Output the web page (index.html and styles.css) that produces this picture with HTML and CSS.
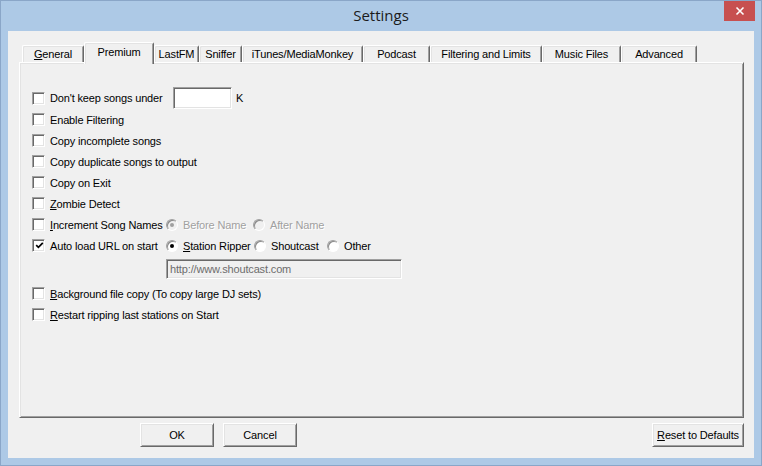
FILE: index.html
```html
<!DOCTYPE html>
<html>
<head>
<meta charset="utf-8">
<title>Settings</title>
<link rel="stylesheet" href="styles.css">
</head>
<body>
<div class="window">
  <div class="titlebar">
    <div class="title">Settings</div>
    <div class="close"><svg width="10" height="10" viewBox="0 0 10 10"><path d="M1.5 1.5L8.5 8.5M8.5 1.5L1.5 8.5" stroke="#fff" stroke-width="1.6" fill="none"/></svg></div>
  </div>
  <div class="client">
    <div class="tabs">
      <div class="tab t-general"><u>G</u>eneral</div>
      <div class="tab tab-active t-premium">Premium</div>
      <div class="tab t-lastfm">LastFM</div>
      <div class="tab t-sniffer">Sniffer</div>
      <div class="tab t-itunes">iTunes/MediaMonkey</div>
      <div class="tab t-podcast">Podcast</div>
      <div class="tab t-filter">Filtering and Limits</div>
      <div class="tab t-music">Music Files</div>
      <div class="tab t-adv">Advanced</div>
    </div>
    <div class="panel">
      <div class="row row-first">
        <div class="check w-under"><span class="cb"></span><span>Don't keep songs under</span></div>
        <span class="textbox"></span><span class="unit">K</span>
      </div>
      <div class="row"><div class="check"><span class="cb"></span><span>Enable Filtering</span></div></div>
      <div class="row"><div class="check"><span class="cb"></span><span>Copy incomplete songs</span></div></div>
      <div class="row"><div class="check"><span class="cb"></span><span>Copy duplicate songs to output</span></div></div>
      <div class="row"><div class="check"><span class="cb"></span><span>Copy on Exit</span></div></div>
      <div class="row"><div class="check"><span class="cb"></span><span><u>Z</u>ombie Detect</span></div></div>
      <div class="row">
        <div class="check w-ctrl"><span class="cb"></span><span><u>I</u>ncrement Song Names</span></div>
        <div class="opt disabled w-before"><span class="rb on"></span><span>Before Name</span></div>
        <div class="opt disabled"><span class="rb"></span><span>After Name</span></div>
      </div>
      <div class="row">
        <div class="check w-ctrl"><span class="cb checked"><svg width="9" height="9" viewBox="0 0 9 9"><path d="M1.2 4.2L3.4 6.4L7.8 1.8" stroke="#000" stroke-width="1.7" fill="none"/></svg></span><span>Auto load URL on start</span></div>
        <div class="opt w-station"><span class="rb on"></span><span><u>S</u>tation Ripper</span></div>
        <div class="opt w-shout"><span class="rb"></span><span>Shoutcast</span></div>
        <div class="opt"><span class="rb"></span><span>Other</span></div>
      </div>
      <div class="row-url"><div class="urlbox">http://www.shoutcast.com</div></div>
      <div class="row"><div class="check"><span class="cb"></span><span><u>B</u>ackground file copy (To copy large DJ sets)</span></div></div>
      <div class="row"><div class="check"><span class="cb"></span><span><u>R</u>estart ripping last stations on Start</span></div></div>
    </div>
    <div class="buttons">
      <div class="btn b-ok">OK</div>
      <div class="btn b-cancel">Cancel</div>
      <div class="spacer"></div>
      <div class="btn b-reset"><u>R</u>eset to Defaults</div>
    </div>
  </div>
</div>
</body>
</html>
```

FILE: styles.css
```css
html, body {
  margin: 0;
  padding: 0;
}
body {
  font-family: "Liberation Sans", Arial, sans-serif;
  font-size: 11px;
  letter-spacing: -0.15px;
  color: #000;
}
u {
  text-decoration: underline;
  text-underline-offset: 1px;
}
.window {
  width: 762px;
  height: 466px;
  box-sizing: border-box;
  border: 1px solid #8aa6c8;
  background: #adc9e6;
  display: flex;
  flex-direction: column;
}
.titlebar {
  height: 30px;
  display: flex;
  align-items: flex-start;
  padding: 0 6px 0 37px;
  flex: 0 0 auto;
}
.title {
  flex: 1;
  text-align: center;
  font-family: "Open Sans", "Noto Sans", sans-serif;
  font-size: 15px;
  letter-spacing: 0;
  line-height: 29px;
  color: #1b1b1b;
}
.close {
  width: 31px;
  height: 20px;
  background: #c75050;
  display: flex;
  align-items: center;
  justify-content: center;
}
.client {
  flex: 1;
  margin: 0 7px 7px 7px;
  background: #f0f0f0;
  padding: 11px 10px 11px 11px;
  display: flex;
  flex-direction: column;
  min-height: 0;
}
.tabs {
  height: 20px;
  display: flex;
  align-items: flex-end;
  padding-left: 3px;
  flex: 0 0 auto;
}
.tab {
  box-sizing: border-box;
  height: 17px;
  border-top: 1px solid #fff;
  border-left: 1px solid #fff;
  border-right: 1px solid #696969;
  border-radius: 2px 2px 0 0;
  box-shadow: inset 1px 1px 0 #e3e3e3, inset -1px 0 0 #a0a0a0;
  text-align: center;
  line-height: 16px;
  white-space: nowrap;
  background: #f0f0f0;
}
.tab-active {
  height: 22px;
  margin-bottom: -2px;
  padding-top: 1px;
  position: relative;
  z-index: 1;
}
.t-general { width: 62px; }
.t-premium { width: 70px; }
.t-lastfm { width: 45px; }
.t-sniffer { width: 43px; }
.t-itunes { width: 121px; }
.t-podcast { width: 67px; }
.t-filter { width: 112px; }
.t-music { width: 79px; }
.t-adv { width: 76px; }

.panel {
  flex: 1;
  box-sizing: border-box;
  border: 1px solid;
  border-color: #fff #696969 #696969 #fff;
  box-shadow: inset 1px 1px 0 #e3e3e3, inset -1px -1px 0 #a0a0a0;
  padding: 24px 12px 0 12px;
  display: flex;
  flex-direction: column;
}
.row {
  height: 21px;
  display: flex;
  align-items: center;
  flex: 0 0 auto;
}
.row-first {
  height: 22px;
}
.check {
  display: flex;
  align-items: center;
  gap: 5px;
  white-space: nowrap;
}
.w-under { width: 141px; }
.w-ctrl { width: 134px; }
.cb {
  width: 13px;
  height: 13px;
  box-sizing: border-box;
  background: #fff;
  border: 1px solid;
  border-color: #a0a0a0 #fff #fff #a0a0a0;
  box-shadow: inset 1px 1px 0 #696969, inset -1px -1px 0 #e3e3e3;
  display: flex;
  align-items: center;
  justify-content: center;
  flex: 0 0 auto;
}
.cb svg {
  display: block;
  margin: 0 0 0 1px;
}
.textbox {
  width: 59px;
  height: 22px;
  box-sizing: border-box;
  background: #fff;
  border: 1px solid;
  border-color: #a0a0a0 #fff #fff #a0a0a0;
  box-shadow: inset 1px 1px 0 #696969, inset -1px -1px 0 #e3e3e3;
}
.unit {
  margin-left: 4px;
}
.opt {
  display: flex;
  align-items: center;
  gap: 5px;
  white-space: nowrap;
}
.w-before { width: 87px; }
.w-station { width: 88px; }
.w-shout { width: 73px; }
.rb {
  width: 12px;
  height: 12px;
  box-sizing: border-box;
  border-radius: 50%;
  background: #fff;
  border: 1px solid;
  border-color: #a0a0a0 #fff #fff #a0a0a0;
  box-shadow: inset 1px 1px 0 #8a8a8a;
  display: flex;
  align-items: center;
  justify-content: center;
  flex: 0 0 auto;
}
.rb.on::after {
  content: "";
  width: 4px;
  height: 4px;
  border-radius: 50%;
  background: #000;
}
.disabled {
  color: #a0a0a0;
  text-shadow: 1px 1px 0 #fff;
}
.disabled .rb {
  background: #f0f0f0;
}
.disabled .rb.on::after {
  background: #a0a0a0;
}
.row-url {
  height: 27px;
  flex: 0 0 auto;
  padding-left: 134px;
  box-sizing: border-box;
}
.urlbox {
  margin-top: 3px;
  width: 236px;
  height: 20px;
  box-sizing: border-box;
  border: 1px solid;
  border-color: #a0a0a0 #fff #fff #a0a0a0;
  box-shadow: inset 1px 1px 0 #696969, inset -1px -1px 0 #e3e3e3;
  background: #f0f0f0;
  color: #6d6d6d;
  padding-left: 3px;
  line-height: 18px;
  white-space: nowrap;
}
.buttons {
  margin-top: 5px;
  height: 24px;
  display: flex;
  flex: 0 0 auto;
}
.btn {
  box-sizing: border-box;
  height: 24px;
  border: 1px solid;
  border-color: #fff #696969 #696969 #fff;
  box-shadow: inset 1px 1px 0 #e3e3e3, inset -1px -1px 0 #a0a0a0;
  display: flex;
  align-items: center;
  justify-content: center;
  white-space: nowrap;
  background: #f0f0f0;
}
.b-ok {
  width: 74px;
  margin-left: 121px;
}
.b-cancel {
  width: 74px;
  margin-left: 9px;
}
.spacer {
  flex: 1;
}
.b-reset {
  width: 92px;
}
```
